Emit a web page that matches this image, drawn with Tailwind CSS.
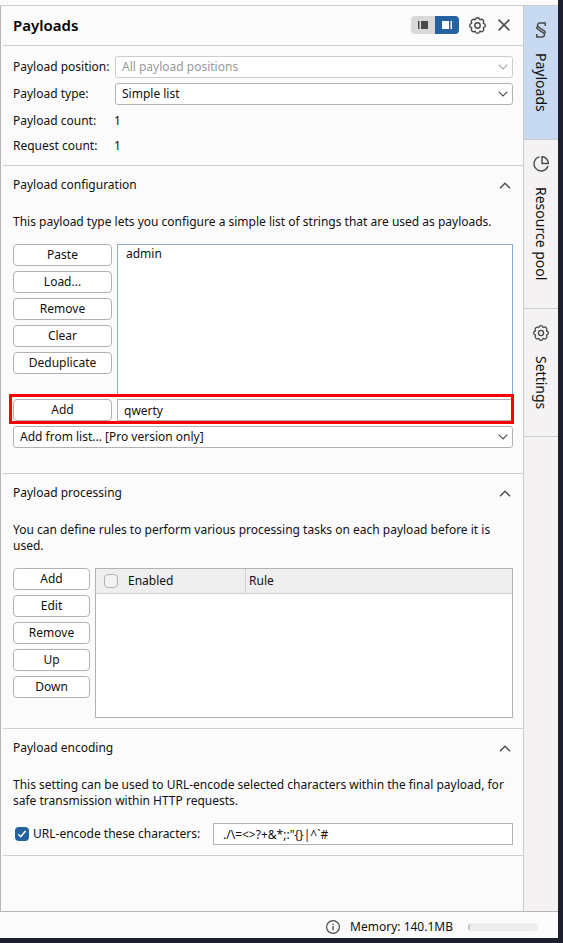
<!DOCTYPE html>
<html lang="en">
<head>
<meta charset="utf-8">
<meta name="viewport" content="width=device-width, initial-scale=1">
<title>Payloads</title>
<script src="https://cdn.jsdelivr.net/npm/@tailwindcss/browser@4"></script>
</head>
<body class="bg-[#1e212d] font-['Noto_Sans','Open_Sans',sans-serif] text-[12px] leading-4 text-[#111]">
<svg class="hidden">
  <symbol id="down" viewBox="0 0 10 6"><path d="M.7.7 5 5 9.300.7" fill="none" stroke="currentColor" stroke-width="1.100"/></symbol>
  <symbol id="up" viewBox="0 0 12 7"><path d="M1 6.300 6 1.300 11 6.300" fill="none" stroke="currentColor" stroke-width="1.400"/></symbol>
  <symbol id="gear" viewBox="0.500 0.500 17 17"><g fill="none" stroke="currentColor" stroke-width="1.400" stroke-linejoin="round"><path d="M6.900 3Q7.200 1.200 9 1.200T11.100 3Q11.600 3.500 12.300 2.900Q13.400 2.200 14.500 3.500T15.100 5.700Q14.500 6.400 15 6.900Q16.800 7.200 16.800 9T15 11.100Q14.500 11.600 15.100 12.300Q15.800 13.400 14.500 14.500T12.300 15.100Q11.600 14.500 11.100 15Q10.800 16.800 9 16.800T6.900 15Q6.400 14.500 5.700 15.100Q4.600 15.800 3.500 14.500T2.900 12.300Q3.500 11.600 3 11.100Q1.200 10.800 1.200 9T3 6.900Q3.500 6.400 2.900 5.700Q2.200 4.600 3.500 3.500T5.700 2.900Q6.400 3.500 6.900 3Z"/><circle cx="9" cy="9" r="2.700"/></g></symbol>
</svg>
<div class="mr-[5px] mb-[5px] flex min-h-[calc(100vh-5px)] flex-col bg-[#fbfbfb] pt-[5px]">
  <div class="flex flex-1 border-y border-t-[#cdcdcd] border-b-[#b9b4b6]">
    <main class="min-w-0 flex-1 border-l border-[#b9b4b6] pl-0.5">
      <header class="flex h-10 items-center border-b border-[#cecfcf] pr-[13px] pb-px pl-2.5">
        <h1 class="flex-1 text-[15px] leading-5 font-semibold text-black">Payloads</h1>
        <div class="flex h-[18px] w-12 overflow-hidden rounded">
          <button aria-label="Dock left" class="flex flex-1 items-center justify-center bg-[#d9d9d9]"><svg class="h-2 w-2.5" viewBox="0 0 10 8" fill="#4a4a4a"><path d="M0 0h1.500v8H0zM3 0h7v8H3z"/></svg></button>
          <button aria-label="Dock right" class="flex flex-1 items-center justify-center bg-[#2463a0]"><svg class="h-2 w-2.5" viewBox="0 0 10 8" fill="#fff"><path d="M0 0h7v8H0zM8.500 0H10v8H8.500z"/></svg></button>
        </div>
        <button aria-label="Options" class="ml-2.5 text-[#4a4a4a]"><svg class="size-[17px]"><use href="#gear"/></svg></button>
        <button aria-label="Close" class="ml-3 text-[#4a4a4a]"><svg class="size-3" viewBox="0 0 12 12" fill="none" stroke="currentColor" stroke-width="1.500"><path d="m.6.6 10.800 10.800M11.400.6.6 11.400"/></svg></button>
      </header>

      <section class="flex flex-col gap-[5px] border-b border-[#cecfcf] px-2.5 pt-2.5 pb-[9px]">
        <div class="flex items-center">
          <label for="pos" class="w-[102px] whitespace-nowrap">Payload position:</label>
          <div class="relative flex-1">
            <select id="pos" disabled class="block h-[22px] w-full appearance-none rounded-[3px] border border-[#cfcccd] bg-white px-1.5 text-[#999] opacity-100"><option>All payload positions</option></select>
            <svg class="pointer-events-none absolute top-2 right-[5px] h-1.5 w-2.5 text-[#a5a5a5]"><use href="#down"/></svg>
          </div>
        </div>
        <div class="flex items-center">
          <label for="type" class="w-[102px] whitespace-nowrap">Payload type:</label>
          <div class="relative flex-1">
            <select id="type" class="block h-[22px] w-full appearance-none rounded-[3px] border border-[#b5b1b2] bg-white px-1.5"><option>Simple list</option></select>
            <svg class="pointer-events-none absolute top-2 right-[5px] h-1.5 w-2.5 text-[#4a4a4a]"><use href="#down"/></svg>
          </div>
        </div>
        <dl class="grid grid-cols-[101px_1fr] gap-y-[5px] pt-px leading-5">
          <dt>Payload count:</dt><dd>1</dd>
          <dt>Request count:</dt><dd>1</dd>
        </dl>
      </section>

      <section class="border-b border-[#cecfcf] px-2.5 pt-[11px] pb-[25px]">
        <div class="flex items-center justify-between pr-0.5"><h2>Payload configuration</h2><button aria-label="Collapse payload configuration" class="text-[#4a4a4a]"><svg class="h-[7px] w-3"><use href="#up"/></svg></button></div>
        <p class="mt-[21px]">This payload type lets you configure a simple list of strings that are used as payloads.</p>
        <div class="mt-3.5 flex gap-[5px]">
          <div class="flex w-[99px] flex-col gap-[5px]">
            <button class="h-[22px] rounded border border-[#b5b1b2] bg-white">Paste</button>
            <button class="h-[22px] rounded border border-[#b5b1b2] bg-white">Load...</button>
            <button class="h-[22px] rounded border border-[#b5b1b2] bg-white">Remove</button>
            <button class="h-[22px] rounded border border-[#b5b1b2] bg-white">Clear</button>
            <button class="h-[22px] rounded border border-[#b5b1b2] bg-white">Deduplicate</button>
          </div>
          <select size="8" aria-label="Payload list" class="block h-[151px] min-w-0 flex-1 appearance-none overflow-hidden border border-[#87aed6] bg-white px-2 outline-none"><option class="p-0">admin</option></select>
        </div>
        <div class="relative mt-1 flex gap-[5px]">
          <button class="h-[22px] w-[99px] rounded border border-[#b5b1b2] bg-white">Add</button>
          <input aria-label="New payload" value="qwerty" class="h-[22px] min-w-0 flex-1 border border-[#b5b1b2] bg-white px-1.5">
          <div class="pointer-events-none absolute -top-[5px] -right-px -bottom-[3px] -left-1 border-3 border-[#fe0000]"></div>
        </div>
        <div class="relative mt-[5px]">
          <select aria-label="Add from list" class="block h-[22px] w-full appearance-none rounded-[3px] border border-[#b5b1b2] bg-white px-1.5"><option>Add from list... [Pro version only]</option></select>
          <svg class="pointer-events-none absolute top-2 right-[5px] h-1.5 w-2.5 text-[#4a4a4a]"><use href="#down"/></svg>
        </div>
      </section>

      <section class="border-b border-[#cecfcf] px-2.5 pt-[11px] pb-2.5">
        <div class="flex items-center justify-between pr-0.5"><h2>Payload processing</h2><button aria-label="Collapse payload processing" class="text-[#4a4a4a]"><svg class="h-[7px] w-3"><use href="#up"/></svg></button></div>
        <p class="mt-[21px]">You can define rules to perform various processing tasks on each payload before it is used.</p>
        <div class="mt-3.5 flex gap-[5px]">
          <div class="flex w-[77px] flex-col gap-[5px]">
            <button class="h-[22px] rounded border border-[#b5b1b2] bg-white">Add</button>
            <button class="h-[22px] rounded border border-[#b5b1b2] bg-white">Edit</button>
            <button class="h-[22px] rounded border border-[#b5b1b2] bg-white">Remove</button>
            <button class="h-[22px] rounded border border-[#b5b1b2] bg-white">Up</button>
            <button class="h-[22px] rounded border border-[#b5b1b2] bg-white">Down</button>
          </div>
          <div class="h-[150px] flex-1 border border-[#b5b1b2] bg-white">
            <table class="w-full table-fixed border-separate border-spacing-0">
              <thead><tr class="bg-[#eee]">
                <th class="h-[25px] w-[150px] border-r border-b border-[#d0d0d0] p-0 pl-2 text-left font-normal"><label class="flex items-center gap-2.5"><input type="checkbox" class="size-3.5 appearance-none rounded border border-[#b5b1b2] bg-[#f2f2f2]">Enabled</label></th>
                <th class="border-b border-[#d0d0d0] p-0 pl-[3px] text-left font-normal">Rule</th>
              </tr></thead>
            </table>
          </div>
        </div>
      </section>

      <section class="border-b border-[#cecfcf] px-2.5 pt-[11px] pb-2.5">
        <div class="flex items-center justify-between pr-0.5"><h2>Payload encoding</h2><button aria-label="Collapse payload encoding" class="text-[#4a4a4a]"><svg class="h-[7px] w-3"><use href="#up"/></svg></button></div>
        <p class="mt-[21px]">This setting can be used to URL-encode selected characters within the final payload, for safe transmission within HTTP requests.</p>
        <div class="mt-3.5 flex items-center pl-0.5">
          <label class="flex w-[198px] items-center gap-1 whitespace-nowrap"><span class="relative flex"><input type="checkbox" checked class="size-3.5 appearance-none rounded bg-[#2463a0]"><svg class="pointer-events-none absolute inset-0 size-3.5" viewBox="0 0 14 14" fill="none" stroke="#fff" stroke-width="1.500"><path d="m3.300 7.300 2.500 2.400 4.700-5.600"/></svg></span>URL-encode these characters:</label>
          <input aria-label="Characters to encode" value="./\=&lt;&gt;?+&amp;*;:&quot;{}|^`#" class="h-[22px] min-w-0 flex-1 border border-[#b5b1b2] bg-white px-[9px]">
        </div>
      </section>
    </main>

    <nav class="flex w-[35px] flex-col border-l border-[#c9cdcd] bg-[#f4f2f3] text-[14px] leading-5">
      <button class="flex h-[134px] flex-col items-center gap-[15px] border-b border-[#c9cdcd] bg-[#c8daf1] pt-4"><svg class="h-4 w-[18px] text-[#4a4a4a]" viewBox="0 0 18 16" fill="none" stroke="currentColor" stroke-width="1.500"><path d="M13.200 4V1H8C5.300 1 4.700 3.900 6.700 5.200L12.200 8.800c1.700 1.200 1.200 2.900-.6 2.900M4.800 12v3H10c2.700 0 3.300-2.900 1.300-4.200L5.800 7.200C4.100 6 4.600 4.300 6.400 4.300"/></svg><span class="[writing-mode:vertical-rl]">Payloads</span></button>
      <button class="flex h-[169px] flex-col items-center gap-[15px] border-b border-[#c9cdcd] pt-4"><svg class="h-4 w-[18px] text-[#4a4a4a]" viewBox="0 0 18 16" fill="none" stroke="currentColor" stroke-width="1.400"><path d="M7.500.9A7.100 7.100 0 1 0 15.900 10M10 .8v6.700h6.300C16.300 3.500 13.500.8 10 .8Z"/></svg><span class="[writing-mode:vertical-rl]">Resource pool</span></button>
      <button class="flex h-32 flex-col items-center gap-[15px] border-b border-[#c9cdcd] pt-4"><svg class="h-4 w-[18px] text-[#4a4a4a]"><use href="#gear"/></svg><span class="[writing-mode:vertical-rl]">Settings</span></button>
    </nav>
  </div>
  <footer class="flex h-[26px] items-center justify-end pt-[3px] pr-5">
    <svg class="mr-2.5 size-3.5 text-[#4a4a4a]" viewBox="0 0 14 14" fill="none" stroke="currentColor"><circle cx="7" cy="7" r="6.400" stroke-width="1.200"/><path d="M7 6v4.300M7 3.700v1.300" stroke-width="1.300"/></svg>
    <span>Memory: 140.1MB</span>
    <div role="progressbar" aria-label="Memory" aria-valuenow="3" class="ml-[15px] h-2 w-[70px] overflow-hidden rounded bg-[#ededed]"><div class="h-full w-0.5 bg-[#c4c4c4]"></div></div>
  </footer>
</div>
</body>
</html>
